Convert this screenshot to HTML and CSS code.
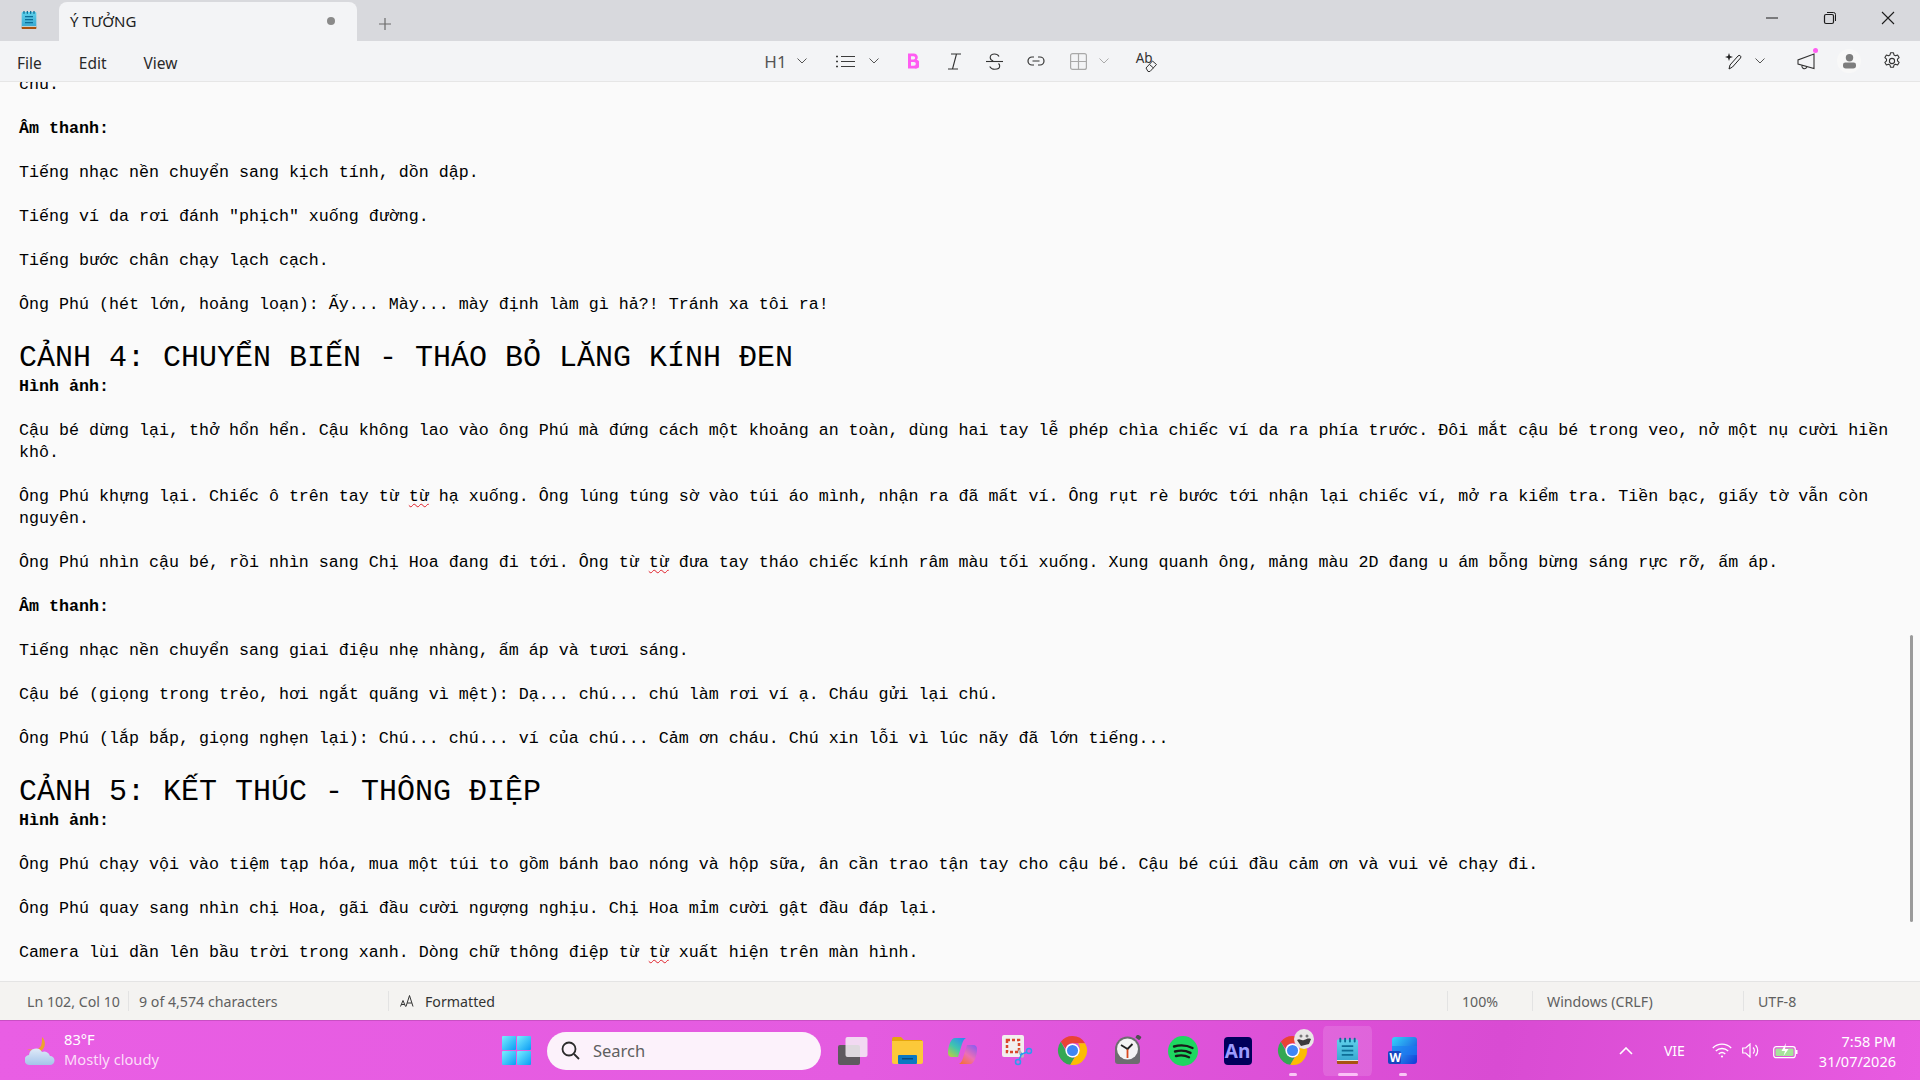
FILE: index.html
```html
<!DOCTYPE html>
<html lang="vi">
<head>
    <meta charset="UTF-8">
    <meta name="viewport" content="width=device-width, initial-scale=1.0">
    <title>Ý TƯỞNG - Notepad</title>
    <link rel="stylesheet" href="styles.css">
</head>
<body>

<svg class="defs" width="0" height="0" aria-hidden="true">
    <defs>
        <linearGradient id="gStart" x1="0" y1="0" x2="1" y2="1">
            <stop offset="0" stop-color="#7befff"/>
            <stop offset="1" stop-color="#0a9cf5"/>
        </linearGradient>
        <linearGradient id="gPad" x1="0" y1="0" x2="0" y2="1">
            <stop offset="0" stop-color="#5fd0ea"/>
            <stop offset="1" stop-color="#35a5cf"/>
        </linearGradient>
        <linearGradient id="gCloud" x1="0" y1="0" x2="0" y2="1">
            <stop offset="0" stop-color="#dfeaf8"/>
            <stop offset="1" stop-color="#a4c4ea"/>
        </linearGradient>
        <linearGradient id="gWord" x1="0" y1="0" x2="1" y2="1">
            <stop offset="0" stop-color="#35d4fb"/>
            <stop offset="1" stop-color="#1138d8"/>
        </linearGradient>
        <linearGradient id="gCopilot" x1="0.800" y1="0" x2="0.100" y2="1">
            <stop offset="0" stop-color="#2c8cf0"/>
            <stop offset="0.5" stop-color="#3fc4b0"/>
            <stop offset="1" stop-color="#b8d040"/>
        </linearGradient>
        <linearGradient id="gCopilot2" x1="0.900" y1="0" x2="0.200" y2="1">
            <stop offset="0" stop-color="#8a5cf0"/>
            <stop offset="0.55" stop-color="#ee6fb4"/>
            <stop offset="1" stop-color="#f5713c"/>
        </linearGradient>
        <symbol id="chrome" viewBox="0 0 32 32">
            <path d="M16 1a15 15 0 0 1 13 7.5H16a7.5 7.5 0 0 0-7.2 5.4L3.9 7A15 15 0 0 1 16 1z" fill="#ea4335"/>
            <path d="M3.9 7l6.6 11.5a7.5 7.5 0 0 0 7.6 4.8l-4.3 7.5A15 15 0 0 1 3.9 7z" fill="#34a853"/>
            <path d="M29 8.500a15 15 0 0 1-15.200 22.300l6.600-11.300A7.500 7.500 0 0 0 21.800 8.500z" fill="#fbbc04"/>
            <circle cx="16" cy="16" r="7.300" fill="#fff"/>
            <circle cx="16" cy="16" r="5.700" fill="#3f86f4"/>
        </symbol>
        <symbol id="notepad" viewBox="0 0 24 28">
            <rect x="1" y="2" width="22" height="24" rx="1.500" fill="url(#gPad)"/>
            <path d="M1 24h22v2.500a1 1 0 0 1-1 1H2a1 1 0 0 1-1-1z" fill="#a8520f"/>
            <path d="M1 23.500h22v1H1z" fill="#e8e4dc"/>
            <path d="M6 9h12M6 13.500h12M6 18h12" stroke="#0d6e97" stroke-width="1.800"/>
            <path d="M4.500 1v3M9.500 1v3M14.500 1v3M19.500 1v3" stroke="#0d6e97" stroke-width="2" stroke-linecap="round"/>
        </symbol>
    </defs>
</svg>

<div class="window">
    <!-- tab strip -->
    <div class="titlebar">
        <svg class="app-icon" width="16" height="20" viewBox="0 0 24 28"><use href="#notepad"/></svg>
        <div class="tab">
            <span class="tab-name">Ý TƯỞNG</span>
            <span class="tab-dot"></span>
        </div>
        <svg class="tab-add" width="14" height="14" viewBox="0 0 14 14"><path d="M7 1v12M1 7h12" stroke="#6b6b6b" stroke-width="1.200"/></svg>
        <div class="caption">
            <button class="caption-btn"><svg width="14" height="14" viewBox="0 0 14 14"><path d="M1 7h12" stroke="#1c1c1c" stroke-width="1"/></svg></button>
            <button class="caption-btn"><svg width="14" height="14" viewBox="0 0 14 14" fill="none" stroke="#1c1c1c"><rect x="1.500" y="3.500" width="9" height="9" rx="1.500" stroke-width="1.200"/><path d="M4 1.500h6.500a2 2 0 0 1 2 2V10" stroke-width="1"/></svg></button>
            <button class="caption-btn"><svg width="14" height="14" viewBox="0 0 14 14"><path d="M1 1l12 12M13 1L1 13" stroke="#1c1c1c" stroke-width="1.100"/></svg></button>
        </div>
    </div>

    <!-- menu and formatting toolbar -->
    <div class="toolbar">
        <nav class="menu">
            <span>File</span>
            <span>Edit</span>
            <span>View</span>
        </nav>
        <div class="format">
            <span class="fmt-h1">H1</span>
            <svg class="chev" width="10" height="6" viewBox="0 0 10 6"><path d="M0.500 0.500L5 5l4.500-4.500" fill="none" stroke="#555"/></svg>
            <svg class="fmt-list" width="19" height="13" viewBox="0 0 19 13" fill="none" stroke="#3c3c3c"><path d="M5 1.500h14M5 6.500h14M5 11.500h14" stroke-width="1.100"/><path d="M0 1.500h2M0 6.500h2M0 11.500h2" stroke-width="1.600"/></svg>
            <svg class="chev" width="10" height="6" viewBox="0 0 10 6"><path d="M0.500 0.500L5 5l4.500-4.500" fill="none" stroke="#555"/></svg>
            <svg class="fmt-b" width="12" height="16" viewBox="0 0 12 16"><path d="M1 0.500h6a3.800 3.800 0 0 1 2.800 6.300A4.100 4.100 0 0 1 7.500 15.500H1zM4 3.300v3.100h2.600a1.550 1.550 0 0 0 0-3.100zM4 9v3.700h3a1.850 1.850 0 0 0 0-3.700z" fill="#ff5df2" fill-rule="evenodd"/></svg>
            <svg class="fmt-i" width="16" height="17" viewBox="0 0 16 17" fill="none" stroke="#333"><path d="M4 1h10M1 16h10M9.500 1L5.500 16" stroke-width="1.100"/></svg>
            <svg class="fmt-s" width="17" height="17" viewBox="0 0 17 17" fill="none" stroke="#333" stroke-width="1.100"><path d="M0 8.500h17"/><path d="M13 3.500C12 1.500 10.500 1 8.500 1 6 1 4.200 2.300 4.200 4.500c0 1.700 1 2.800 3 3.500M12.500 10.500c.8 .7 1.200 1.600 1.200 2.500 0 2-2.200 3.300-5 3.300-2.300 0-4-1-5-2.800"/></svg>
            <svg class="fmt-link" width="18" height="10" viewBox="0 0 18 10" fill="none" stroke="#333" stroke-width="1.200"><path d="M7 1H5a4 4 0 0 0 0 8h2M11 1h2a4 4 0 0 1 0 8h-2M5.500 5h7"/></svg>
            <svg class="fmt-table" width="17" height="17" viewBox="0 0 17 17" fill="none" stroke="#a9a9a9" stroke-width="1.200"><rect x="0.600" y="0.600" width="15.800" height="15.800" rx="2"/><path d="M8.500 1v15M1 8.500h15"/></svg>
            <svg class="chev" width="10" height="6" viewBox="0 0 10 6"><path d="M0.500 0.500L5 5l4.500-4.500" fill="none" stroke="#aaa"/></svg>
            <span class="fmt-clear">
                Ab
                <svg class="eraser" width="12" height="12" viewBox="0 0 12 12" fill="#f3f4f6" stroke="#333" stroke-width="1"><path d="M1 8l6.500-7 4 3.500-6.500 7H3zM4.500 4.500l4 3.500"/></svg>
            </span>
        </div>
        <div class="tools-right">
            <svg class="tool-pen" width="17" height="17" viewBox="0 0 17 17"><path d="M4 0l1 3 3 1-3 1-1 3-1-3-3-1 3-1z" fill="#222"/><path d="M4 16l1-4 8-9a1.500 1.500 0 0 1 2.500 2l-8 9z" fill="none" stroke="#222"/></svg>
            <svg class="chev" width="10" height="6" viewBox="0 0 10 6"><path d="M0.500 0.500L5 5l4.500-4.500" fill="none" stroke="#555"/></svg>
            <span class="tool-bell">
                <svg width="18" height="17" viewBox="0 0 18 17" fill="none" stroke="#333" stroke-width="1.100"><path d="M1 7v4l16 4.500V1zM5 12.500a2.500 2.500 0 0 0 5 1.200"/></svg>
                <span class="bell-dot"></span>
            </span>
            <span class="tool-avatar">
                <svg width="13" height="16" viewBox="0 0 14 16" fill="#7d7d7d"><circle cx="7" cy="4.500" r="4"/><path d="M0 12a2.500 2.500 0 0 1 2.500-2.500h9A2.500 2.500 0 0 1 14 12v1a3 3 0 0 1-3 3H3a3 3 0 0 1-3-3z"/></svg>
            </span>
            <svg class="tool-gear" width="18" height="18" viewBox="0 0 18 18" fill="none" stroke="#333" stroke-width="1.100"><circle cx="9" cy="9" r="2.600"/><path d="M7.500 0.800h3l.5 2.200 1.500.8 2.100-.8 1.500 2.600-1.600 1.500v1.800l1.600 1.500-1.500 2.600-2.100-.8-1.500.8-.5 2.200h-3l-.5-2.200-1.500-.8-2.100.8-1.500-2.600 1.600-1.500V7.100L1.900 5.600l1.500-2.600 2.100.8L7 3z" stroke-linejoin="round"/></svg>
        </div>
    </div>

    <!-- document -->
    <main class="editor">
        <div class="doc">
            <p>chú.</p>
            <p><b>Âm thanh:</b></p>
            <p>Tiếng nhạc nền chuyển sang kịch tính, dồn dập.</p>
            <p>Tiếng ví da rơi đánh "phịch" xuống đường.</p>
            <p>Tiếng bước chân chạy lạch cạch.</p>
            <p>Ông Phú (hét lớn, hoảng loạn): Ấy... Mày... mày định làm gì hả?! Tránh xa tôi ra!</p>
            <h1>CẢNH 4: CHUYỂN BIẾN - THÁO BỎ LĂNG KÍNH ĐEN</h1>
            <p><b>Hình ảnh:</b></p>
            <p>Cậu bé dừng lại, thở hổn hển. Cậu không lao vào ông Phú mà đứng cách một khoảng an toàn, dùng hai tay lễ phép chìa chiếc ví da ra phía trước. Đôi mắt cậu bé trong veo, nở một nụ cười hiền khô.</p>
            <p>Ông Phú khựng lại. Chiếc ô trên tay từ <span class="typo">từ</span> hạ xuống. Ông lúng túng sờ vào túi áo mình, nhận ra đã mất ví. Ông rụt rè bước tới nhận lại chiếc ví, mở ra kiểm tra. Tiền bạc, giấy tờ vẫn còn nguyên.</p>
            <p>Ông Phú nhìn cậu bé, rồi nhìn sang Chị Hoa đang đi tới. Ông từ <span class="typo">từ</span> đưa tay tháo chiếc kính râm màu tối xuống. Xung quanh ông, mảng màu 2D đang u ám bỗng bừng sáng rực rỡ, ấm áp.</p>
            <p><b>Âm thanh:</b></p>
            <p>Tiếng nhạc nền chuyển sang giai điệu nhẹ nhàng, ấm áp và tươi sáng.</p>
            <p>Cậu bé (giọng trong trẻo, hơi ngắt quãng vì mệt): Dạ... chú... chú làm rơi ví ạ. Cháu gửi lại chú.</p>
            <p>Ông Phú (lắp bắp, giọng nghẹn lại): Chú... chú... ví của chú... Cảm ơn cháu. Chú xin lỗi vì lúc nãy đã lớn tiếng...</p>
            <h1>CẢNH 5: KẾT THÚC - THÔNG ĐIỆP</h1>
            <p><b>Hình ảnh:</b></p>
            <p>Ông Phú chạy vội vào tiệm tạp hóa, mua một túi to gồm bánh bao nóng và hộp sữa, ân cần trao tận tay cho cậu bé. Cậu bé cúi đầu cảm ơn và vui vẻ chạy đi.</p>
            <p>Ông Phú quay sang nhìn chị Hoa, gãi đầu cười ngượng nghịu. Chị Hoa mỉm cười gật đầu đáp lại.</p>
            <p>Camera lùi dần lên bầu trời trong xanh. Dòng chữ thông điệp từ <span class="typo">từ</span> xuất hiện trên màn hình.</p>
        </div>
        <div class="scroll-thumb"></div>
    </main>

    <!-- status bar -->
    <footer class="status">
        <div class="cell cell-pos">Ln 102, Col 10</div>
        <div class="cell cell-count">9 of 4,574 characters</div>
        <div class="cell cell-mode">
            <svg width="14" height="12" viewBox="0 0 14 12" fill="none" stroke="#333"><path d="M0.500 11.500L3 5.500l2.500 6M1.300 9.500h3.400M6 11.500L9.500 0.500l3.500 11M7.200 8h4.600"/></svg>
            <span>Formatted</span>
        </div>
        <div class="cell cell-zoom">100%</div>
        <div class="cell cell-eol">Windows (CRLF)</div>
        <div class="cell cell-enc">UTF-8</div>
    </footer>
</div>

<!-- windows taskbar -->
<div class="taskbar">
    <div class="weather">
        <svg width="30" height="30" viewBox="0 0 30 30">
            <path d="M17 1a9 9 0 0 1-1 14L2 13a10 10 0 0 0 14-3c1-3 1-6 1-9z" fill="#eda32c"/>
            <path d="M5 29a5 5 0 0 1-1-10 7 7 0 0 1 13-3 6 6 0 0 1 8 4 4.500 4.500 0 0 1 0 9z" fill="url(#gCloud)"/>
        </svg>
        <div class="weather-text">
            <span class="temp">83°F</span>
            <span class="sky">Mostly cloudy</span>
        </div>
    </div>

    <div class="apps">
        <svg class="start" width="29" height="29" viewBox="0 0 29 29" fill="url(#gStart)">
            <rect width="14" height="14" rx="1"/><rect x="15" width="14" height="14" rx="1"/><rect y="15" width="14" height="14" rx="1"/><rect x="15" y="15" width="14" height="14" rx="1"/>
        </svg>
        <div class="search">
            <svg width="19" height="19" viewBox="0 0 19 19" fill="none" stroke="#2b2b2b" stroke-width="1.800"><circle cx="8" cy="8" r="6.500"/><path d="M13 13l5 5"/></svg>
            <span>Search</span>
        </div>
        <span class="app">
            <svg width="30" height="28" viewBox="0 0 30 28"><rect x="0" y="8" width="22" height="20" rx="2" fill="#5e5a5e"/><rect x="7.500" y="0" width="22" height="20" rx="2" fill="#f4f0f4" opacity=".85"/></svg>
        </span>
        <span class="app">
            <svg width="31" height="27" viewBox="0 0 31 27"><path d="M0 2a2 2 0 0 1 2-2h7l3 3h18v4H0z" fill="#e5a50d"/><path d="M0 4h31v21a2 2 0 0 1-2 2H2a2 2 0 0 1-2-2z" fill="#fcc93a"/><rect x="6" y="18" width="19" height="9" rx="1" fill="#0a78c2"/><rect x="10" y="21" width="11" height="1.500" fill="#084a80"/></svg>
        </span>
        <span class="app">
            <svg width="29" height="26" viewBox="0 0 29 26"><path d="M7 0h11c-2 1-3 3-4 6l-4 13H4c-3 0-4-2-4-4C0 8 3 0 7 0z" fill="url(#gCopilot)"/><path d="M22 26H11c2-1 3-3 4-6l4-13h6c3 0 4 2 4 4 0 7-3 15-7 15z" fill="url(#gCopilot2)"/></svg>
        </span>
        <span class="app">
            <svg width="31" height="31" viewBox="0 0 31 31"><rect width="22" height="22" rx="2" fill="#f2eeee"/><rect x="5" y="5" width="12" height="12" fill="none" stroke="#d9472b" stroke-width="2.500" stroke-dasharray="3 2"/><path d="M17 14l5 6v2l-2 1-4-6z" fill="#b8b8b8"/><circle cx="27" cy="16" r="2.500" fill="none" stroke="#2c9cf0" stroke-width="1.500"/><circle cx="16" cy="27" r="2.500" fill="none" stroke="#2c9cf0" stroke-width="1.500"/><path d="M25 17l-7 3M17 25l3-7" stroke="#2c9cf0" stroke-width="1.500"/></svg>
        </span>
        <span class="app">
            <svg width="31" height="31"><use href="#chrome"/></svg>
        </span>
        <span class="app">
            <svg width="31" height="31" viewBox="0 0 31 31"><path d="M3 26V14a12.500 12.500 0 0 1 25 0v12a3 3 0 0 1-3 3H6a3 3 0 0 1-3-3z" fill="#6d6d70"/><rect x="24" y="0" width="5" height="4" rx="1" transform="rotate(35 26 2)" fill="#4f4f52"/><circle cx="15.500" cy="14" r="10.500" fill="#f4f4f4"/><path d="M15.500 14v9" stroke="#d9481c" stroke-width="1.800"/><path d="M15.500 14L9 10M15.500 14l5-5" stroke="#222" stroke-width="1.800"/></svg>
        </span>
        <span class="app">
            <svg width="30" height="30" viewBox="0 0 30 30"><circle cx="15" cy="15" r="15" fill="#1ed760"/><path d="M6 10.500c6-1.700 13-1.200 18.500 1.500M7 15.500c5-1.400 11-1 15.500 1.400M8 20c4.500-1 9-.8 13 1.200" fill="none" stroke="#1a1a1a" stroke-width="2.400" stroke-linecap="round"/></svg>
        </span>
        <span class="app">
            <span class="an-logo">An</span>
        </span>
        <span class="app app-chrome2 running">
            <svg width="31" height="31"><use href="#chrome"/></svg>
            <svg class="profile-pic" width="20" height="20" viewBox="0 0 20 20"><circle cx="10" cy="10" r="10" fill="#e9e6e6"/><path d="M3 11c3-2 4 1 7 0s4-2 7-1l-2 5-8 2z" fill="#3a3a3a"/><circle cx="7" cy="7" r="1.500" fill="#777"/><circle cx="13" cy="7" r="1.500" fill="#777"/></svg>
        </span>
        <span class="app app-active running">
            <svg width="23" height="30" viewBox="0 0 24 28"><use href="#notepad"/></svg>
        </span>
        <span class="app running">
            <svg width="29" height="28" viewBox="0 0 29 28"><rect x="4" y="0" width="25" height="27" rx="3" fill="url(#gWord)"/><rect x="4" y="9" width="25" height="9" fill="#1d7cf2" opacity=".6"/><rect x="0" y="14" width="13" height="13" rx="2" fill="#1546c0"/><text x="1.500" y="24.800" class="word-w">W</text></svg>
        </span>
    </div>

    <div class="tray">
        <svg class="tray-up" width="14" height="8" viewBox="0 0 14 8"><path d="M1 7l6-6 6 6" fill="none" stroke="#fff" stroke-width="1.600"/></svg>
        <span class="lang">VIE</span>
        <svg class="tray-wifi" width="20" height="15" viewBox="0 0 20 15" fill="none" stroke="#fff" stroke-width="1.300"><path d="M0.800 5a13 13 0 0 1 18.400 0M3.800 8a9 9 0 0 1 12.400 0M6.700 11a5 5 0 0 1 6.600 0"/><circle cx="10" cy="13.500" r="1.100" fill="#fff" stroke="none"/></svg>
        <svg class="tray-vol" width="19" height="15" viewBox="0 0 19 15" fill="none" stroke="#fff" stroke-width="1.200"><path d="M0.700 5v5h3l4.300 4V1L3.700 5z"/><path d="M11 4.500a4 4 0 0 1 0 6M13.500 2a8 8 0 0 1 0 11"/></svg>
        <svg class="tray-bat" width="25" height="16" viewBox="0 0 25 16"><rect x="0.700" y="3.700" width="21.600" height="11" rx="2.500" fill="none" stroke="#fff" stroke-width="1.200"/><rect x="2.500" y="5.500" width="18" height="7.500" rx="1" fill="#a6e39a"/><rect x="23" y="7" width="1.500" height="4" fill="#fff"/><path d="M13 0L8.500 8H12l-1.500 5 5-7h-3.500z" fill="#fff"/></svg>
        <div class="clock">
            <span>7:58 PM</span>
            <span>31/07/2026</span>
        </div>
    </div>
</div>

</body>
</html>
```

FILE: styles.css
```css
* {
    box-sizing: border-box;
}

html, body {
    margin: 0;
    height: 100%;
    overflow: hidden;
}

body {
    width: 1920px;
    height: 1080px;
    display: flex;
    flex-direction: column;
    font-family: "Noto Sans", "Open Sans", sans-serif;
    background-color: #fafafa;
}

.defs {
    position: absolute;
}

.window {
    height: 1020px;
    display: flex;
    flex-direction: column;
}

/* Tab strip */
.titlebar {
    height: 41px;
    flex-shrink: 0;
    display: flex;
    align-items: flex-end;
    background-color: #d8d9dd;
}

.app-icon {
    margin: 0 0 11px 21px;
}

.tab {
    width: 298px;
    height: 39px;
    margin-left: 22px;
    padding: 0 22px 2px 11px;
    display: flex;
    align-items: center;
    justify-content: space-between;
    background-color: #f3f4f6;
    border-radius: 8px 8px 0 0;
}

.tab-name {
    font-size: 15px;
    color: #1c1c1c;
}

.tab-dot {
    width: 8px;
    height: 8px;
    border-radius: 50%;
    background-color: #8a8a8a;
}

.tab-add {
    margin: 0 0 10px 21px;
}

.caption {
    margin-left: auto;
    margin-right: 3px;
    height: 100%;
    display: flex;
}

.caption-btn {
    width: 58px;
    padding: 0;
    border: none;
    background: none;
    display: flex;
    align-items: center;
    justify-content: center;
}

.caption-btn svg {
    margin-bottom: 6px;
}

/* Menu + formatting toolbar */
.toolbar {
    height: 41px;
    flex-shrink: 0;
    display: grid;
    grid-template-columns: 1fr auto 1fr;
    align-items: center;
    background-color: #f3f4f6;
    border-bottom: 1px solid #e6e6e6;
}

.menu {
    display: flex;
    gap: 37px;
    padding: 3px 0 0 17px;
    font-size: 15.500px;
    color: #2a2a2a;
}

.format {
    display: flex;
    align-items: center;
    color: #444;
}

.fmt-h1 {
    font-size: 17px;
    color: #555;
    margin-right: 10px;
}

.fmt-list {
    margin-left: 29px;
    margin-right: 14px;
}

.fmt-b {
    margin-left: 28px;
}

.fmt-i {
    margin-left: 28px;
}

.fmt-s {
    margin-left: 23px;
}

.fmt-link {
    margin-left: 24px;
}

.fmt-table {
    margin-left: 25px;
    margin-right: 12px;
}

.fmt-clear {
    position: relative;
    width: 20px;
    height: 20px;
    margin-left: 27px;
    font-size: 13.500px;
    line-height: 15px;
    color: #333;
}

.eraser {
    position: absolute;
    right: -1px;
    bottom: -1px;
}

.tools-right {
    display: flex;
    align-items: center;
    justify-content: flex-end;
    padding-right: 19px;
}

.tools-right .chev {
    margin-left: 13px;
}

.tool-bell {
    position: relative;
    margin-left: 32px;
    display: flex;
}

.bell-dot {
    position: absolute;
    top: -5px;
    right: -3px;
    width: 5px;
    height: 5px;
    border-radius: 50%;
    background-color: #ff5df2;
}

.tool-avatar {
    width: 24px;
    height: 24px;
    margin-left: 22px;
    border-radius: 50%;
    background-color: #f8f8f8;
    display: flex;
    align-items: center;
    justify-content: center;
}

.tool-gear {
    margin-left: 22px;
}

/* Document */
.editor {
    flex: 1;
    position: relative;
    overflow: hidden;
    background-color: #fafafa;
}

.doc {
    margin-top: -8px;
    padding: 0 24px 0 19px;
    font-family: "Liberation Mono", monospace;
    font-size: 16.667px;
    line-height: 22px;
    color: #000;
}

.doc p {
    margin: 0 0 22px;
}

.doc h1 {
    margin: 0;
    padding-top: 2px;
    font-size: 30px;
    line-height: 36px;
    font-weight: 400;
}

.typo {
    text-decoration: underline wavy #e0202a 1px;
    text-underline-offset: 2px;
}

.scroll-thumb {
    position: absolute;
    top: 553px;
    right: 7px;
    width: 3px;
    height: 287px;
    border-radius: 2px;
    background-color: #9b9b9b;
}

/* Status bar */
.status {
    height: 39px;
    flex-shrink: 0;
    display: flex;
    align-items: center;
    font-size: 14.200px;
    color: #606060;
    background-color: #f4f3f1;
    border-top: 1px solid #e4e4e4;
}

.cell {
    height: 20px;
    display: flex;
    align-items: center;
    white-space: nowrap;
    border-left: 1px solid #e3e3e3;
    padding-left: 14px;
}

.cell-pos {
    width: 128px;
    padding-left: 27px;
    border-left: none;
}

.cell-count {
    width: 260px;
    padding-left: 10px;
}

.cell-mode {
    flex: 1;
    gap: 11px;
    padding-left: 11px;
    color: #333;
}

.cell-zoom {
    width: 85px;
}

.cell-eol {
    width: 211px;
}

.cell-enc {
    width: 177px;
}

/* Taskbar */
.taskbar {
    height: 60px;
    flex-shrink: 0;
    display: grid;
    grid-template-columns: 1fr auto 1fr;
    align-items: center;
    color: #fff;
    font-size: 14.500px;
    background: linear-gradient(100deg, #e95ee4 0%, #e45be0 45%, #d94bd3 78%, #e85be1 100%);
    border-top: 1px solid #c94fc4;
}

.weather {
    display: flex;
    align-items: center;
    gap: 9px;
    padding-left: 25px;
}

.weather-text {
    display: flex;
    flex-direction: column;
    margin-top: -3px;
    font-size: 14.700px;
    line-height: 20px;
}

.sky {
    color: #fcdcf9;
}

.apps {
    display: flex;
    align-items: center;
    height: 100%;
    padding-left: 12px;
}

.start {
    margin-right: 16px;
}

.search {
    width: 274px;
    height: 38px;
    margin-right: 4px;
    padding-left: 14px;
    display: flex;
    align-items: center;
    gap: 13px;
    border-radius: 19px;
    font-size: 16.500px;
    color: #5f5f5f;
    background-color: #fcf2fb;
}

.app {
    position: relative;
    width: 55px;
    height: 50px;
    display: flex;
    align-items: center;
    justify-content: center;
    border-radius: 6px;
}

.app-active {
    padding: 0 3px;
    background-color: rgba(255, 255, 255, 0.13);
    background-clip: content-box;
}

.running::after {
    content: "";
    position: absolute;
    bottom: 0;
    left: 50%;
    width: 8px;
    height: 3px;
    margin-left: -4px;
    border-radius: 2px;
    background-color: #f9c6f5;
}

.app-active::after {
    width: 20px;
    margin-left: -10px;
    background-color: #fbc0f7;
}

.profile-pic {
    position: absolute;
    top: 3px;
    right: 6px;
}

.an-logo {
    width: 28px;
    height: 28px;
    display: flex;
    align-items: center;
    justify-content: center;
    border-radius: 4px;
    font-size: 19px;
    font-weight: 700;
    color: #9c9cff;
    background-color: #00005b;
}

.word-w {
    font-family: "Noto Sans", sans-serif;
    font-size: 12px;
    font-weight: 700;
    fill: #fff;
}

.tray {
    display: flex;
    align-items: center;
    justify-content: flex-end;
    padding-right: 24px;
}

.lang {
    margin-left: 31px;
    font-size: 14px;
}

.tray-wifi {
    margin-left: 27px;
}

.tray-vol {
    margin-left: 10px;
}

.tray-bat {
    margin-left: 12px;
}

.clock {
    margin-left: 21px;
    display: flex;
    flex-direction: column;
    align-items: flex-end;
    line-height: 20px;
}
```
